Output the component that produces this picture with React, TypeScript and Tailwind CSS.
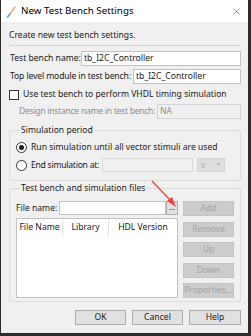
import { X } from 'lucide-react';

const font = "font-['Noto_Sans','Open_Sans',sans-serif]";

function Btn({ label, disabled, className = '' }: { label: string; disabled?: boolean; className?: string }) {
  return (
    <div
      className={`flex items-center justify-center border leading-none whitespace-nowrap ${
        disabled ? 'bg-[#cccccc] border-[#c4c4c4] text-[#a3a3a3]' : 'bg-[#e1e1e1] border-[#adadad] text-[#1a1a1a]'
      } ${className}`}
    >
      {label}
    </div>
  );
}

export default function App() {
  return (
    <div className={`relative w-[251px] h-[336px] bg-[#2e2e2e] ${font}`}>
      <div className="ml-px w-[247px] h-[333px] bg-[#f0f0f0] flex flex-col text-[8.6px] text-[#1a1a1a] whitespace-nowrap">
        {/* Title bar */}
        <div className="h-[22px] bg-white flex items-center shrink-0">
          <svg width="10" height="12" viewBox="0 0 10 12" className="ml-[5px] mt-[1px]">
            <path d="M9 1 L4 8" stroke="#f0a070" strokeWidth="1.3" strokeLinecap="round" />
            <path d="M4 8 L1.5 11" stroke="#4a9be0" strokeWidth="1.5" strokeLinecap="round" />
          </svg>
          <span className="ml-[5px] text-[9.8px] text-black">New Test Bench Settings</span>
          <X className="ml-auto mr-[6px] w-[11px] h-[11px] text-[#555]" strokeWidth={1.2} />
        </div>

        {/* Body */}
        <div className="pl-[8px] pr-[7px] flex flex-col">
          <div className="mt-[7px] h-[12px] leading-[12px]">Create new test bench settings.</div>
          <div className="mt-[4px] border-t border-[#d2d2d2]" />

          <div className="mt-[5px] h-[15px] flex items-center">
            <span className="pl-px">Test bench name:</span>
            <div className="ml-auto w-[161px] h-full bg-white border border-[#c2c2c2] flex items-center pl-[2px]">
              tb_I2C_Controller
            </div>
          </div>

          <div className="mt-[3px] h-[15px] flex items-center">
            <span className="pl-px tracking-[-0.13px]">Top level module in test bench:</span>
            <div className="ml-auto w-[108px] h-full bg-white border border-[#c2c2c2] flex items-center pl-[2px]">
              tb_I2C_Controller
            </div>
          </div>

          <div className="mt-[3px] h-[15px] flex items-center">
            <div className="w-[10px] h-[10px] bg-white border border-[#333]" />
            <span className="ml-[4px]">Use test bench to perform VHDL timing simulation</span>
          </div>

          <div className="mt-[2px] h-[15px] flex items-center">
            <span className="pl-[10px] text-[#8d8d8d] tracking-[-0.28px]">Design instance name in test bench:</span>
            <div className="ml-auto w-[84px] h-full bg-[#f0f0f0] border border-[#d4d4d4] flex items-center pl-[2px] text-[#8d8d8d]">
              NA
            </div>
          </div>

          {/* Simulation period */}
          <fieldset className="mt-[5px] border border-[#dcdcdc] rounded-[2px] pl-[6px] pb-[8px]">
            <legend className="ml-[4px] px-[1px] h-[12px] leading-[12px]">Simulation period</legend>
            <div className="mt-[5px] h-[12px] flex items-center">
              <div className="w-[11px] h-[11px] rounded-full bg-white border border-[#333] flex items-center justify-center">
                <div className="w-[5px] h-[5px] rounded-full bg-[#1a1a1a]" />
              </div>
              <span className="ml-[4px]">Run simulation until all vector stimuli are used</span>
            </div>
            <div className="mt-[5px] h-[14px] flex items-center">
              <div className="w-[11px] h-[11px] rounded-full bg-white border border-[#333]" />
              <span className="ml-[4px] tracking-[-0.25px]">End simulation at:</span>
              <div className="ml-auto w-[91px] h-full bg-[#f0f0f0] border border-[#d8d8d8]" />
              <div className="ml-[4px] mr-[15px] w-[28px] h-full bg-[#dedede] border border-[#d4d4d4] flex items-center justify-between px-[3px] text-[#b0b0b0]">
                <span>s</span>
                <span className="text-[5px]">▼</span>
              </div>
            </div>
          </fieldset>

          {/* Test bench and simulation files */}
          <fieldset className="mt-[1px] border border-[#dcdcdc] rounded-[2px] pl-[6px] pr-[6px] pb-[3px]">
            <legend className="ml-[4px] px-[1px] h-[12px] leading-[12px]">Test bench and simulation files</legend>
            <div className="mt-[7px] flex gap-[5px]">
              <div className="w-[162px] flex flex-col">
                <div className="h-[14px] flex items-center">
                  <span>File name:</span>
                  <div className="ml-auto w-[107px] h-full bg-white border border-[#c2c2c2]" />
                  <Btn label="..." className="w-[12px] h-full text-[8px] pb-[2px]" />
                </div>
                <div className="mt-[3px] h-[80px] bg-white border border-[#c2c2c2]">
                  <div className="h-[17px] flex">
                    <div className="w-[46px] flex items-center justify-center border-r border-[#e4e4e4]">File Name</div>
                    <div className="w-[46px] flex items-center justify-center border-r border-[#e4e4e4]">Library</div>
                    <div className="flex-1 flex items-center justify-center">HDL Version</div>
                  </div>
                </div>
              </div>
              <div className="w-[51px] flex flex-col gap-[5.5px]">
                <Btn label="Add" disabled className="h-[15px]" />
                <Btn label="Remove" disabled className="h-[15px]" />
                <Btn label="Up" disabled className="h-[15px]" />
                <Btn label="Down" disabled className="h-[15px]" />
                <Btn label="Properties..." disabled className="h-[15px]" />
              </div>
            </div>
          </fieldset>

          <div className="mt-[8px] flex justify-end gap-[6px]">
            <Btn label="OK" className="w-[51px] h-[15px]" />
            <Btn label="Cancel" className="w-[51px] h-[15px]" />
            <Btn label="Help" className="w-[52px] h-[15px]" />
          </div>
        </div>
      </div>

      {/* Red annotation arrow */}
      <svg className="absolute left-0 top-0" width="251" height="336" viewBox="0 0 251 336">
        <line x1="152" y1="181" x2="172" y2="202" stroke="#e8453c" strokeWidth="1.3" />
        <polygon points="176,207 167,201 172,197" fill="#e8453c" />
      </svg>
    </div>
  );
}
